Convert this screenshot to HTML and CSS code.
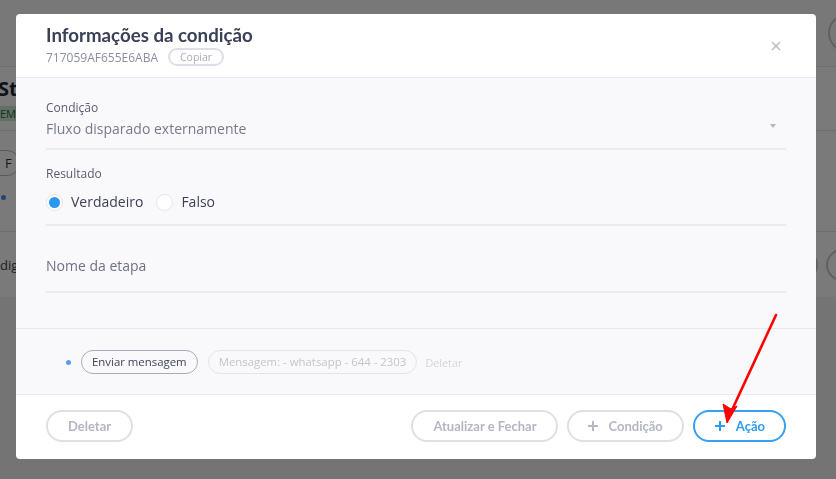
FILE: index.html
```html
<!DOCTYPE html>
<html lang="pt-BR">
<head>
<meta charset="utf-8">
<title>Informações da condição</title>
<link rel="stylesheet" href="styles.css">
</head>
<body>
<div class="page">
  <div class="topbar"><span class="circle-btn"></span></div>
  <div class="panel">
    <div class="prow prow1">
      <div class="ptitle">Strategy</div>
      <span class="pbadge">EM</span>
    </div>
    <div class="prow prow2">
      <span class="ppill">F</span>
      <div class="pline"><span class="pdot"></span><span class="pgray"></span></div>
    </div>
    <div class="prow prow3">
      <span class="ptext">Códig</span>
      <span class="pcircles"><span class="pc"></span><span class="pc"></span></span>
    </div>
  </div>
  <div class="pfoot"></div>
</div>
<div class="overlay"></div>

<div class="modal">
  <div class="m-header">
    <div class="m-titles">
      <h1 class="m-title">Informações da condição</h1>
      <div class="m-meta">
        <span class="m-id">717059AF655E6ABA</span>
        <button class="copy-btn">Copiar</button>
      </div>
    </div>
    <button class="close-btn" aria-label="Fechar">
      <svg width="10" height="10" viewBox="0 0 10 10"><path d="M1 1 L9 9 M9 1 L1 9" stroke="#b9bdc8" stroke-width="1.6" fill="none"/></svg>
    </button>
  </div>

  <div class="m-body">
    <div class="field field-select">
      <div class="f-label">Condição</div>
      <div class="f-value-row">
        <span class="f-value">Fluxo disparado externamente</span>
        <span class="caret"></span>
      </div>
    </div>
    <div class="field field-radio">
      <div class="f-label">Resultado</div>
      <div class="radios">
        <label class="radio"><span class="r-circle checked"></span><span class="r-text">Verdadeiro</span></label>
        <label class="radio"><span class="r-circle"></span><span class="r-text">Falso</span></label>
      </div>
    </div>
    <div class="field field-input">
      <span class="f-placeholder">Nome da etapa</span>
    </div>
  </div>

  <div class="m-actions">
    <span class="a-dot"></span>
    <span class="a-pill a-pill-main">Enviar mensagem</span>
    <span class="a-pill a-pill-sub">Mensagem: - whatsapp - 644 - 2303</span>
    <span class="a-del">Deletar</span>
  </div>

  <div class="m-footer">
    <button class="btn">Deletar</button>
    <div class="f-right">
      <button class="btn btn-update">Atualizar e Fechar</button>
      <button class="btn btn-cond"><svg width="10" height="10" viewBox="0 0 10 10"><path d="M5 0 V10 M0 5 H10" stroke="#b6b9c6" stroke-width="2"/></svg>Condição</button>
      <button class="btn btn-primary"><svg width="10" height="10" viewBox="0 0 10 10"><path d="M5 0 V10 M0 5 H10" stroke="#2e9bf3" stroke-width="2"/></svg>Ação</button>
    </div>
  </div>
</div>

<svg class="annot" width="836" height="479" viewBox="0 0 836 479">
  <path d="M776 315 L732 410" stroke="#ff0000" stroke-width="2.6" fill="none" stroke-linecap="round"/>
  <path d="M727 423 L723 404 L731 409 L737 406 Z" fill="#ff0000" stroke="#ff0000" stroke-width="1"/>
</svg>
</body>
</html>
```

FILE: styles.css
```css
* { box-sizing: border-box; }
html, body { margin: 0; padding: 0; }
body {
  width: 836px;
  height: 479px;
  overflow: hidden;
  font-family: "Open Sans", "Noto Sans", sans-serif;
  background: #eceef0;
}
button { font-family: inherit; background: none; border: 0; padding: 0; margin: 0; cursor: pointer; }

/* ----- background page (dimmed) ----- */
.page { width: 836px; height: 479px; display: flex; flex-direction: column; }
.topbar {
  height: 67px;
  background: #fbfbfd;
  border-bottom: 1px solid #e6e6ea;
  display: flex;
  justify-content: flex-end;
  align-items: center;
}
.circle-btn {
  width: 38px; height: 38px; border-radius: 50%;
  border: 2px solid #c9c9cf;
  margin-right: -30px;
}
.panel { height: 230px; background: #ffffff; display: flex; flex-direction: column; }
.prow { border-bottom: 1px solid #e6e6ea; }
.prow1 { height: 64px; padding: 10px 0 0 0; }
.ptitle { font: 700 20px/24px "Open Sans", sans-serif; color: #222633; margin-left: -2px; }
.pbadge {
  display: inline-block; margin-top: 2px;
  background: #cde9d4; color: #1f6b3c;
  font-size: 11px; line-height: 15px; padding: 0 4px 0 1px; margin-left: -1px;
}
.prow2 { height: 101px; padding-top: 19px; display: flex; flex-direction: column; gap: 14px; }
.ppill {
  width: 40px; height: 26px; border-radius: 13px; border: 1px solid #b8bac4;
  margin-left: -20px; font-size: 13px; line-height: 24px; padding-left: 24px; color: #333;
}
.pline { display: flex; align-items: center; gap: 10px; }
.pdot { width: 5px; height: 5px; border-radius: 50%; background: #4a8fe0; margin-left: 1px; }
.pgray { width: 20px; height: 14px; border-radius: 7px; background: #e0e0e6; }
.prow3 { flex: 1; border-bottom: 0; display: flex; justify-content: space-between; align-items: center; }
.ptext { font-size: 13px; color: #444; margin-left: -16px; }
.pcircles { display: flex; gap: 8px; margin-right: -30px; }
.pc { width: 40px; height: 32px; border-radius: 16px; border: 2px solid #c8c8ce; }
.pfoot { flex: 1; background: #f2f2f5; }

.overlay {
  position: fixed; inset: 0;
  background: rgba(0, 0, 0, 0.52);
}

/* ----- modal ----- */
.modal {
  position: fixed;
  left: 16px; top: 14px;
  width: 800px;
  background: #ffffff;
  border-radius: 4px;
  overflow: hidden;
}
.m-header {
  display: flex;
  justify-content: space-between;
  align-items: center;
  padding: 10px 30px 10px 30px;
  border-bottom: 1px solid #e8e9ee;
}
.m-title {
  margin: 0;
  font: 700 18.7px/22px "Lato", "Open Sans", sans-serif;
  color: #3a4158;
}
.m-meta { margin-top: 1px; height: 20px; display: flex; align-items: center; gap: 10px; }
.m-id { font-size: 12px; color: #8b8f9f; }
.copy-btn {
  height: 18px; padding: 0 10px;
  border: 2px solid #dedee6; border-radius: 9px;
  font: 400 10.5px/14px "Open Sans", sans-serif; color: #a9adba;
}
.close-btn { width: 20px; height: 20px; display: flex; align-items: center; justify-content: center; margin-right: 0; }

.m-body {
  background: #f9f9fc;
  padding: 22px 30px 35px 30px;
  border-bottom: 1px solid #e8e9ee;
}
.f-label { font-size: 12px; line-height: 16px; color: #585d70; }
.field-select { border-bottom: 2px solid #ebebef; padding-bottom: 9px; }
.f-value-row { display: flex; justify-content: space-between; align-items: center; margin-top: 3px; }
.f-value { font-size: 14px; line-height: 20px; color: #767b8c; }
.caret {
  width: 0; height: 0; margin-right: 10px; margin-top: -6px;
  border-left: 3.5px solid transparent; border-right: 3.5px solid transparent;
  border-top: 4px solid #b3b6c2;
}
.field-radio { margin-top: 16px; border-bottom: 2px solid #ebebef; padding-bottom: 10px; }
.radios { display: flex; align-items: center; gap: 13px; margin-top: 8px; height: 24px; }
.radio { display: flex; align-items: center; gap: 8px; }
.r-circle {
  width: 17px; height: 17px; border-radius: 50%;
  background: #ffffff; border: 1px solid #e4e4ea;
  display: flex; align-items: center; justify-content: center;
}
.r-circle.checked::after {
  content: ""; width: 11px; height: 11px; border-radius: 50%; background: #2b98f2;
}
.r-text { font-size: 14px; line-height: 20px; color: #3c4156; }
.field-input { padding: 30px 0 15px 0; border-bottom: 2px solid #ebebef; }
.f-placeholder { display: block; font-size: 14px; line-height: 20px; color: #6d7283; }

.m-actions {
  background: #f9f9fc;
  padding: 21px 30px 20px 50px;
  border-bottom: 1px solid #e8e9ee;
  display: flex; align-items: center;
}
.a-dot { width: 5px; height: 5px; border-radius: 50%; background: #5b9df0; margin-right: 10px; }
.a-pill {
  height: 24px; border-radius: 12px; padding: 0 10px;
  font-size: 11.4px; line-height: 22px;
}
.a-pill-main { border: 1px solid #a9abb9; color: #3e4358; }
.a-pill-sub { border: 1px solid #e3e3e9; color: #c2c4ce; margin-left: 10px; }
.a-del { font-size: 10.8px; color: #d3d5dc; margin-left: 8px; }

.m-footer {
  display: flex; justify-content: space-between; align-items: center;
  padding: 15px 30px 17px 30px;
}
.f-right { display: flex; gap: 9px; }
.btn {
  height: 32px; border-radius: 16px;
  border: 2px solid #dfdfe7;
  padding: 0 20px;
  font: 700 13px/28px "Lato", "Open Sans", sans-serif;
  color: #b3b6c5;
  display: flex; align-items: center; gap: 11px;
}
.btn-update { padding: 0 19px 0 20px; }
.btn-cond { padding: 0 19px 0 19px; }
.btn-primary { border-color: #35a0f4; color: #2e9bf3; padding: 0 19px 0 20px; }

.annot { position: fixed; left: 0; top: 0; pointer-events: none; }
```
